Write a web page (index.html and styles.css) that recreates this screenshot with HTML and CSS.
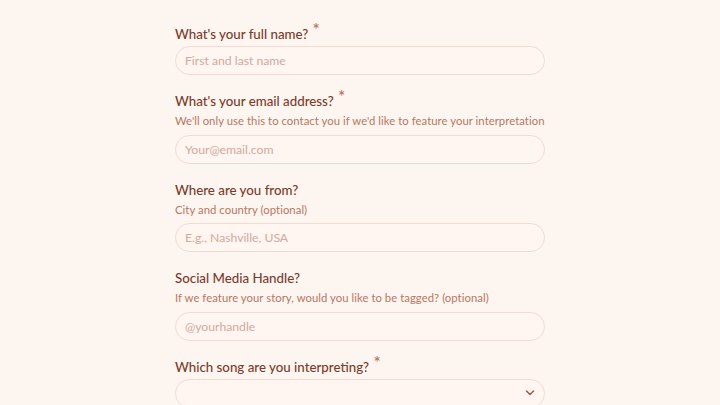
FILE: index.html
```html
<!DOCTYPE html>
<html lang="en">
<head>
<meta charset="utf-8">
<link rel="stylesheet" href="styles.css">
</head>
<body>
<form class="form">
  <div class="field">
    <label class="label">What's your full name? <span class="req">*</span></label>
    <input class="input" type="text" placeholder="First and last name">
  </div>
  <div class="field">
    <label class="label">What's your email address? <span class="req">*</span></label>
    <p class="desc">We'll only use this to contact you if we'd like to feature your interpretation</p>
    <input class="input" type="text" placeholder="Your@email.com">
  </div>
  <div class="field">
    <label class="label">Where are you from?</label>
    <p class="desc">City and country (optional)</p>
    <input class="input" type="text" placeholder="E.g., Nashville, USA">
  </div>
  <div class="field">
    <label class="label">Social Media Handle?</label>
    <p class="desc">If we feature your story, would you like to be tagged? (optional)</p>
    <input class="input" type="text" placeholder="@yourhandle">
  </div>
  <div class="field">
    <label class="label">Which song are you interpreting? <span class="req">*</span></label>
    <div class="select">
      <svg class="chev" width="12" height="8" viewBox="0 0 12 8"><path d="M2.5 2 L6 5.5 L9.5 2" fill="none" stroke="#9a5a4a" stroke-width="1.5" stroke-linecap="round" stroke-linejoin="round"/></svg>
    </div>
  </div>
</form>
</body>
</html>
```
FILE: styles.css
```css
html, body {
  margin: 0;
  padding: 0;
  background: #fdf5f0;
  height: 405px;
  overflow: hidden;
}
body {
  font-family: Lato, "Noto Sans", sans-serif;
}
.form {
  width: 370px;
  margin: 0 auto;
  padding-top: 24px;
  display: flex;
  flex-direction: column;
  gap: 16px;
}
.field {
  display: flex;
  flex-direction: column;
}
.label {
  font-size: 13.3px;
  line-height: 20px;
  color: #7b3b2b;
  font-weight: 500;
  margin-bottom: 2px;
  white-space: nowrap;
}
.req {
  color: #b86f5e;
  font-size: 17px;
  line-height: 0;
  position: relative;
  top: -3px;
  margin-left: 1px;
}
.desc {
  margin: 0 0 5.5px;
  font-size: 11.3px;
  line-height: 16px;
  color: #b87763;
  white-space: nowrap;
  letter-spacing: 0.05px;
}
.input, .select {
  box-sizing: border-box;
  width: 370px;
  height: 29px;
  border: 1px solid #f0dcd3;
  border-radius: 15px;
  background: #fff5f1;
  padding: 0 9px;
  font-family: Lato, "Noto Sans", sans-serif;
  font-size: 12.2px;
  color: #7b3b2b;
  outline: none;
}
.input::placeholder {
  color: #cfaa9d;
}
.select {
  display: flex;
  align-items: center;
  justify-content: flex-end;
  padding-right: 8px;
}
.chev {
  display: block;
}
```
